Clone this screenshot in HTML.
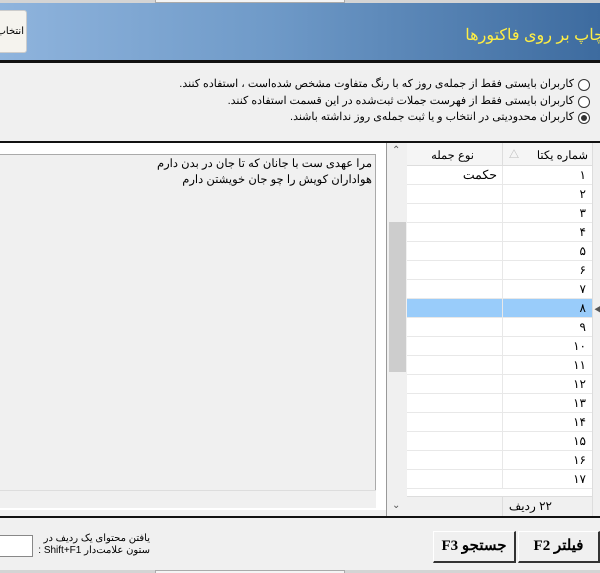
<!DOCTYPE html>
<html><head><meta charset="utf-8"><style>
*{margin:0;padding:0;box-sizing:border-box}
body{width:600px;height:573px;overflow:hidden;background:#f0f0f0;position:relative;font-family:"Liberation Sans","Noto Sans CJK SC",sans-serif;font-size:12px}
.a{position:absolute}
.rtl{direction:rtl}
.row{position:absolute;left:407px;width:185px;height:19px;border-bottom:1px solid #e8e8e8;background:#fff}
.row .c1{position:absolute;left:95px;width:90px;height:19px;border-left:1px solid #e8e8e8;text-align:right;padding-right:6px;line-height:18px;color:#000}
.radio{position:absolute;right:10px;width:12px;height:12px;border:1px solid #333;border-radius:50%;background:#fff}
.rl{position:absolute;right:26px;direction:rtl;font-size:11px;color:#000;letter-spacing:-0.1px}
.btn{position:absolute;top:531px;height:32px;background:#f0f0f0;border-top:1px solid #fff;border-left:1px solid #fff;border-right:2px solid #333;border-bottom:2px solid #333;font-weight:bold;font-size:15px;text-align:center;line-height:28px;color:#000;font-family:"Liberation Serif",serif}
</style></head><body>
<div class="a" style="left:0;top:0;width:600px;height:3px;background:#d4d4d4"></div>
<div class="a" style="left:155px;top:0;width:190px;height:3px;background:#f4f4f4;border:1px solid #aaa;border-top:0"></div>
<div class="a" style="left:0;top:3px;width:600px;height:58px;background:linear-gradient(90deg,#8fb4dd 0%,#6f9ac8 45%,#3d6b9f 100%)"></div>
<div class="a" style="left:-5px;top:10px;width:32px;height:43px;background:#f5f3ee;border:1px solid #ccc;border-radius:3px;font-size:10px;line-height:41px;text-align:right;padding-right:2px;direction:rtl;overflow:hidden;white-space:nowrap">انتخاب</div>
<div class="a rtl" style="right:-4px;top:25px;color:#ffee44;font-size:16px;white-space:nowrap">چاپ بر روی فاکتورها</div>
<div class="a" style="left:0;top:60px;width:600px;height:3px;background:#111"></div>
<div class="radio" style="top:79px"></div>
<div class="rl" style="top:77px">کاربران بایستی فقط از جمله‌ی روز که با رنگ متفاوت مشخص شده‌است ، استفاده کنند.</div>
<div class="radio" style="top:96px"></div>
<div class="rl" style="top:94px">کاربران بایستی فقط از فهرست جملات ثبت‌شده در این قسمت استفاده کنند.</div>
<div class="radio" style="top:112px"><div style="width:6px;height:6px;border-radius:50%;background:#333;margin:2px"></div></div>
<div class="rl" style="top:110px">کاربران محدودیتی در انتخاب و یا ثبت جمله‌ی روز نداشته باشند.</div>
<div class="a" style="left:0;top:141px;width:600px;height:2px;background:#111"></div>
<div class="a" style="left:0;top:143px;width:386px;height:367px;background:#fff"></div>
<div class="a" style="left:0;top:154px;width:376px;height:336px;background:#f0f0f0;border-top:1px solid #aaa;border-right:1px solid #aaa"></div>
<div class="a rtl" style="right:228px;top:156px;font-size:11.5px;line-height:16px;text-align:right;white-space:nowrap">مرا عهدی ست با جانان که تا جان در بدن دارم<br>هواداران کویش را چو جان خویشتن دارم</div>
<div class="a" style="left:0;top:490px;width:376px;height:18px;background:#f0f0f0;border-top:1px solid #ddd"></div>
<div class="a" style="left:386px;top:143px;width:1px;height:373px;background:#999"></div>
<div class="a" style="left:389px;top:143px;width:18px;height:373px;background:#f0f0f0"></div>
<div class="a" style="left:389px;top:222px;width:17px;height:150px;background:#cdcdcd"></div>
<div class="a" style="left:392px;top:145px;font-size:10px;color:#555">⌃</div>
<div class="a" style="left:392px;top:500px;font-size:10px;color:#555">⌄</div>
<div class="a" style="left:407px;top:143px;width:193px;height:373px;background:#fff"></div>
<div class="a" style="left:407px;top:143px;width:185px;height:23px;background:#f5f5f5;border-bottom:1px solid #ddd"></div>
<div class="a" style="left:502px;top:143px;width:1px;height:23px;background:#ddd"></div>
<div class="a rtl" style="right:12px;top:148px;font-size:11.5px">شماره یکتا</div>
<div class="a" style="left:509px;top:146px;font-size:10px;color:#aaa">△</div>
<div class="a rtl" style="right:126px;top:148px;font-size:11.5px">نوع جمله</div>
<div class="a" style="left:592px;top:143px;width:8px;height:373px;background:#f0f0f0;border-left:1px solid #ddd"></div>
<div class="row" style="top:166px"><div class="a rtl" style="right:95px;top:0;font-size:12.5px;line-height:18px">حکمت</div><div class="c1">۱</div></div>
<div class="row" style="top:185px"><div class="c1">۲</div></div>
<div class="row" style="top:204px"><div class="c1">۳</div></div>
<div class="row" style="top:223px"><div class="c1">۴</div></div>
<div class="row" style="top:242px"><div class="c1">۵</div></div>
<div class="row" style="top:261px"><div class="c1">۶</div></div>
<div class="row" style="top:280px"><div class="c1">۷</div></div>
<div class="row" style="top:299px;background:#99ccfa"><div class="c1">۸</div></div>
<div class="a" style="left:594px;top:304px;font-size:8px;color:#555">◀</div>
<div class="row" style="top:318px"><div class="c1">۹</div></div>
<div class="row" style="top:337px"><div class="c1">۱۰</div></div>
<div class="row" style="top:356px"><div class="c1">۱۱</div></div>
<div class="row" style="top:375px"><div class="c1">۱۲</div></div>
<div class="row" style="top:394px"><div class="c1">۱۳</div></div>
<div class="row" style="top:413px"><div class="c1">۱۴</div></div>
<div class="row" style="top:432px"><div class="c1">۱۵</div></div>
<div class="row" style="top:451px"><div class="c1">۱۶</div></div>
<div class="row" style="top:470px"><div class="c1">۱۷</div></div>
<div class="a" style="left:407px;top:496px;width:185px;height:20px;background:#f0f0f0;border-top:1px solid #ddd"></div>
<div class="a" style="left:502px;top:496px;width:1px;height:20px;background:#ddd"></div>
<div class="a rtl" style="right:48px;top:499px;font-size:12px">۲۲ ردیف</div>
<div class="a" style="left:0;top:516px;width:600px;height:2px;background:#111"></div>
<div class="a" style="left:-2px;top:535px;width:35px;height:22px;background:#fff;border:1px solid #888"></div>
<div class="a rtl" style="left:40px;top:533px;font-size:10px;line-height:12px;text-align:right;width:110px;white-space:nowrap">یافتن محتوای یک ردیف در<br>ستون علامت‌دار Shift+F1 :</div>
<div class="btn" style="left:433px;width:83px">F3 <span class="rtl" style="font-family:'Liberation Sans','Noto Sans CJK SC',sans-serif">جستجو</span></div>
<div class="btn" style="left:518px;width:82px">F2 <span style="font-family:'Liberation Sans','Noto Sans CJK SC',sans-serif">فیلتر</span></div>
<div class="a" style="left:0;top:570px;width:600px;height:3px;background:#d4d4d4"></div>
<div class="a" style="left:155px;top:570px;width:190px;height:3px;background:#f4f4f4;border:1px solid #aaa;border-bottom:0"></div>
</body></html>
